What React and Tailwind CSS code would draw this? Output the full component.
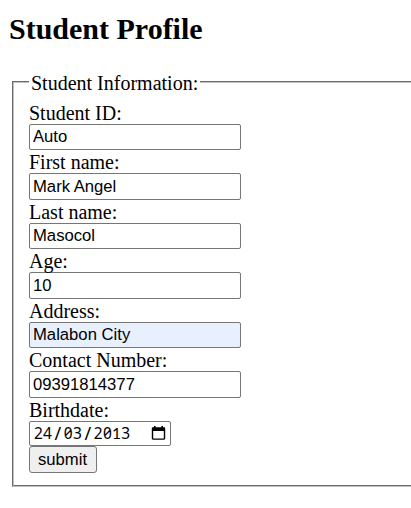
const fields = [
  { label: "Student ID:", value: "Auto" },
  { label: "First name:", value: "Mark Angel" },
  { label: "Last name:", value: "Masocol" },
  { label: "Age:", value: "10" },
  { label: "Address:", value: "Malabon City", filled: true },
  { label: "Contact Number:", value: "09391814377" },
];

const arial = "font-['Liberation_Sans',sans-serif] text-[16.667px]";

function Label({ children }) {
  return <label className="block h-[23px] leading-[25px]">{children}</label>;
}

function TextField({ label, value, filled }) {
  return (
    <div>
      <Label>{label}</Label>
      <input
        type="text"
        defaultValue={value}
        className={`block h-[26.5px] w-[212px] rounded-[2px] border border-[#767676] px-[3px] py-0 text-black ${arial} ${filled ? "bg-[#e8f0fe]" : "bg-white"}`}
      />
    </div>
  );
}

function Digits({ text }) {
  return (
    <span className="flex px-[1.25px]">
      {text.split("").map((c, i) => (
        <span
          key={i}
          className={`flex w-[9.17px] justify-center ${c === "1" ? "font-['Lato',sans-serif]" : ""}`}
        >
          {c}
        </span>
      ))}
    </span>
  );
}

function Slash() {
  return <span className="flex w-[9.17px] justify-center text-[18px]">/</span>;
}

function DateField() {
  return (
    <div className="flex h-[25.25px] w-[142px] items-center justify-between rounded-[2px] border border-[#767676] bg-white pl-[2.5px] pr-1">
      <div className="flex font-['Noto_Sans',sans-serif] text-[15.5px] leading-[20px] [font-feature-settings:'zero']">
        <Digits text="24" />
        <Slash />
        <Digits text="03" />
        <Slash />
        <Digits text="2013" />
      </div>
      <svg width="15" height="16" viewBox="0 0 15 16">
        <path
          fill="#000"
          fillRule="evenodd"
          d="M2 2.2h1V1h1.6v1.2h5.8V1H12v1.2h1c.7 0 1.2.5 1.2 1.2v10.2c0 .7-.5 1.2-1.2 1.2H2c-.7 0-1.2-.5-1.2-1.2V3.400c0-.7.5-1.2 1.2-1.2zM2.200 6v7.400h10.600V6z"
        />
      </svg>
    </div>
  );
}

export default function App() {
  return (
    <main className="h-[508px] w-[411px] overflow-hidden bg-white pl-[10px] pt-[12px] font-['Liberation_Serif',serif] text-[20px] text-black">
      <h2 className="-ml-px h-[34px] text-[30px] font-bold leading-[34px]">Student Profile</h2>
      <fieldset className="ml-[2px] mt-[25px] h-[416px] w-[440px] border-2 border-[#c0c0c0] [border-style:groove] pl-[15px] pt-[7.75px]">
        <legend className="h-[22px] px-[2px] leading-[25px]">Student Information:</legend>
        {fields.map((f) => (
          <TextField key={f.label} {...f} />
        ))}
        <Label>Birthdate:</Label>
        <DateField />
        <button
          type="button"
          className={`block h-[27px] w-[68px] rounded-[3px] border border-[#767676] bg-[#efefef] pr-px text-center ${arial}`}
        >
          submit
        </button>
      </fieldset>
    </main>
  );
}
